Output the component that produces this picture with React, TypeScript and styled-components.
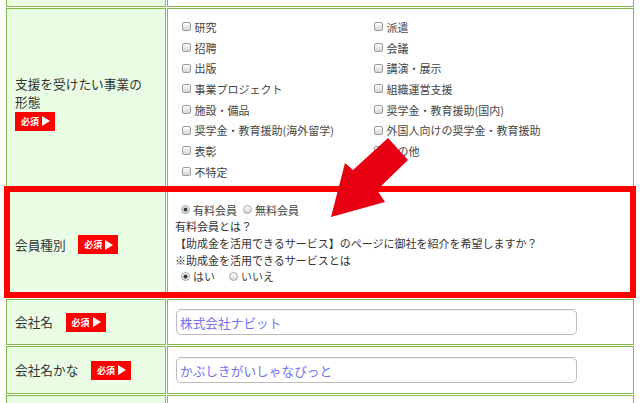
import React from 'react';
import styled, { createGlobalStyle } from 'styled-components';

const GlobalStyle = createGlobalStyle`
  html, body { margin: 0; padding: 0; background: #fff; }
  body {
    font-family: "Noto Sans CJK JP", "Noto Sans", sans-serif;
    color: #333;
    overflow: hidden;
  }
`;

const GREEN = '#86bb4c';

const Page = styled.div`
  position: relative;
  width: 640px;
  height: 403px;
  overflow: hidden;
  padding-left: 6px;
  box-sizing: border-box;
`;

const FormGrid = styled.div`
  display: grid;
  grid-template-columns: 160px 467px;
  grid-template-rows: 7px 182px 107px 46px 48px 40px;
  gap: 1px;
`;

const LabelCell = styled.div<{ $stack?: boolean; $edge?: 'top' | 'bottom' }>`
  box-sizing: border-box;
  background: #e8fde4;
  border: 1px solid ${GREEN};
  ${(p) => (p.$edge === 'top' ? 'border-top: none;' : '')}
  ${(p) => (p.$edge === 'bottom' ? 'border-bottom: none;' : '')}
  display: flex;
  flex-direction: ${(p) => (p.$stack ? 'column' : 'row')};
  align-items: ${(p) => (p.$stack ? 'flex-start' : 'center')};
  justify-content: ${(p) => (p.$stack ? 'center' : 'flex-start')};
  padding: ${(p) => (p.$stack ? '7px 16px 0 8px' : '0 16px 0 8px')};
  font-size: 12.7px;
  line-height: 18px;
  color: #333;
`;

const FieldCell = styled.div<{ $align?: 'top' | 'center'; $pad?: number; $edge?: 'top' | 'bottom' }>`
  box-sizing: border-box;
  background: #fff;
  border: 1px solid ${GREEN};
  ${(p) => (p.$edge === 'top' ? 'border-top: none;' : '')}
  ${(p) => (p.$edge === 'bottom' ? 'border-bottom: none;' : '')}
  display: flex;
  flex-direction: column;
  justify-content: ${(p) => (p.$align === 'top' ? 'flex-start' : 'center')};
  padding: ${(p) => p.$pad ?? 0}px 0 0 7px;
`;

const Badge = styled.span<{ $inline?: boolean }>`
  display: inline-flex;
  align-items: center;
  gap: 3px;
  box-sizing: border-box;
  width: 40px;
  height: 19px;
  padding-left: 6px;
  margin-left: ${(p) => (p.$inline ? '12.5px' : '0')};
  margin-top: ${(p) => (p.$inline ? '0' : '1px')};
  background: #ff0000;
  color: #fff;
  font-size: 9px;
  font-weight: bold;
  line-height: 1;
  flex-shrink: 0;
  &::after {
    content: '';
    width: 0;
    height: 0;
    border-left: 8px solid #fff;
    border-top: 5px solid transparent;
    border-bottom: 5px solid transparent;
  }
`;

const CheckList = styled.div`
  display: grid;
  grid-template-columns: 192px 1fr;
  grid-template-rows: repeat(8, 20.7px);
  grid-auto-flow: column;
`;

const CheckItem = styled.label`
  display: flex;
  align-items: center;
  font-size: 11px;
  color: #444;
  white-space: nowrap;
`;

const CheckBox = styled.input.attrs({ type: 'checkbox' })`
  appearance: none;
  -webkit-appearance: none;
  width: 9px;
  height: 9px;
  margin: 0 3.5px 0 7px;
  box-sizing: border-box;
  border: 1px solid #9d9d9d;
  border-radius: 2px;
  background: linear-gradient(#fdfdfd, #d6d6d6);
  flex-shrink: 0;
`;

const TextLine = styled.div`
  font-size: 11px;
  line-height: 16.7px;
  height: 16.7px;
  color: #333;
  white-space: nowrap;
`;

const RadioGroup = styled.div<{ $gap: number }>`
  display: flex;
  align-items: center;
  gap: ${(p) => p.$gap}px;
  font-size: 11px;
  line-height: 16.7px;
  height: 16.7px;
  color: #444;
`;

const RadioOption = styled.label`
  display: inline-flex;
  align-items: center;
  white-space: nowrap;
`;

const Radio = styled.input.attrs({ type: 'radio' })`
  appearance: none;
  -webkit-appearance: none;
  width: 9px;
  height: 9px;
  margin: 0 3px 0 6px;
  box-sizing: border-box;
  border: 1px solid #a3a3a3;
  border-radius: 50%;
  background: linear-gradient(#fdfdfd, #d8d8d8);
  flex-shrink: 0;
  &:checked {
    background: radial-gradient(circle, #3a3a3a 0 1.8px, transparent 2.3px),
      linear-gradient(#fdfdfd, #d8d8d8);
  }
`;

const TextInput = styled.input.attrs({ type: 'text' })`
  box-sizing: border-box;
  width: 401px;
  height: 26px;
  margin: 0 0 0 1px;
  padding: 0 0 0 3px;
  border: 1.5px solid #bcbcbc;
  border-radius: 5px;
  background: #fff;
  box-shadow: inset 0 1px 1px rgba(0, 0, 0, 0.06);
  font-family: "Noto Sans CJK JP", "Noto Sans", sans-serif;
  font-size: 12.7px;
  color: #7373ee;
  outline: none;
`;

const Highlight = styled.div`
  position: absolute;
  left: 4px;
  top: 186px;
  width: 632px;
  height: 112px;
  box-sizing: border-box;
  border: 6px solid #ff0000;
  pointer-events: none;
`;

const Arrow = styled.svg`
  position: absolute;
  left: 320px;
  top: 130px;
  width: 100px;
  height: 95px;
  pointer-events: none;
`;

const leftItems = ['研究', '招聘', '出版', '事業プロジェクト', '施設・備品', '奨学金・教育援助(海外留学)', '表彰', '不特定'];
const rightItems = ['派遣', '会議', '講演・展示', '組織運営支援', '奨学金・教育援助(国内)', '外国人向けの奨学金・教育援助', 'その他'];

export default function App() {
  return (
    <>
      <GlobalStyle />
      <Page>
        <FormGrid>
          <LabelCell $edge="top" />
          <FieldCell $edge="top" />

          <LabelCell $stack>
            <span>支援を受けたい事業の形態</span>
            <Badge>必須</Badge>
          </LabelCell>
          <FieldCell $align="top" $pad={7.5}>
            <CheckList>
              {[...leftItems, ...rightItems].map((t) => (
                <CheckItem key={t}>
                  <CheckBox />
                  {t}
                </CheckItem>
              ))}
            </CheckList>
          </FieldCell>

          <LabelCell>
            会員種別
            <Badge $inline>必須</Badge>
          </LabelCell>
          <FieldCell $align="top" $pad={9.5}>
            <RadioGroup $gap={0}>
              <RadioOption>
                <Radio name="member" defaultChecked />
                有料会員
              </RadioOption>
              <RadioOption>
                <Radio name="member" />
                無料会員
              </RadioOption>
            </RadioGroup>
            <TextLine>有料会員とは？</TextLine>
            <TextLine>【助成金を活用できるサービス】のページに御社を紹介を希望しますか？</TextLine>
            <TextLine>※助成金を活用できるサービスとは</TextLine>
            <RadioGroup $gap={8}>
              <RadioOption>
                <Radio name="service" defaultChecked />
                はい
              </RadioOption>
              <RadioOption>
                <Radio name="service" />
                いいえ
              </RadioOption>
            </RadioGroup>
          </FieldCell>

          <LabelCell>
            会社名
            <Badge $inline>必須</Badge>
          </LabelCell>
          <FieldCell>
            <TextInput defaultValue="株式会社ナビット" />
          </FieldCell>

          <LabelCell>
            会社名かな
            <Badge $inline>必須</Badge>
          </LabelCell>
          <FieldCell>
            <TextInput defaultValue="かぶしきがいしゃなびっと" />
          </FieldCell>

          <LabelCell $edge="bottom" />
          <FieldCell $edge="bottom" />
        </FormGrid>
        <Highlight />
        <Arrow viewBox="0 0 100 95">
          <polygon points="68,8 88,30 57,60 65,72 11,87 25,33 33,40" fill="#e60012" />
        </Arrow>
      </Page>
    </>
  );
}
